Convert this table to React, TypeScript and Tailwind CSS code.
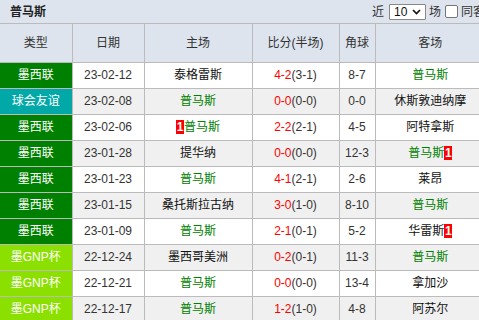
import React from "react";

type Row = {
  type: string;
  date: string;
  home: string;
  homeWin?: boolean;
  homeRed?: boolean;
  score: string;
  half: string;
  corner: string;
  away: string;
  awayWin?: boolean;
  awayRed?: boolean;
};

const TEAM = "普马斯";

const rows: Row[] = [
  { type: "墨西联", date: "23-02-12", home: "泰格雷斯", score: "4-2", half: "(3-1)", corner: "8-7", away: TEAM },
  { type: "球会友谊", date: "23-02-08", home: TEAM, score: "0-0", half: "(0-0)", corner: "0-0", away: "休斯敦迪纳摩" },
  { type: "墨西联", date: "23-02-06", home: TEAM, homeRed: true, score: "2-2", half: "(2-1)", corner: "4-5", away: "阿特拿斯" },
  { type: "墨西联", date: "23-01-28", home: "提华纳", score: "0-0", half: "(0-0)", corner: "12-3", away: TEAM, awayRed: true },
  { type: "墨西联", date: "23-01-23", home: TEAM, score: "4-1", half: "(2-1)", corner: "2-6", away: "莱昂" },
  { type: "墨西联", date: "23-01-15", home: "桑托斯拉古纳", score: "3-0", half: "(1-0)", corner: "8-10", away: TEAM },
  { type: "墨西联", date: "23-01-09", home: TEAM, score: "2-1", half: "(0-1)", corner: "5-2", away: "华雷斯", awayRed: true },
  { type: "墨GNP杯", date: "22-12-24", home: "墨西哥美洲", score: "0-2", half: "(0-1)", corner: "11-3", away: TEAM },
  { type: "墨GNP杯", date: "22-12-21", home: TEAM, score: "0-0", half: "(0-0)", corner: "13-4", away: "拿加沙" },
  { type: "墨GNP杯", date: "22-12-17", home: TEAM, score: "1-2", half: "(1-0)", corner: "4-8", away: "阿苏尔" },
];

function typeBg(t: string) {
  if (t === "球会友谊") return "bg-[#00a8a8]";
  if (t === "墨GNP杯") return "bg-[#8ce000]";
  return "bg-[#008000]";
}

function Red() {
  return (
    <span className="inline-block w-[8px] h-[14px] leading-[14px] bg-[#ff0000] text-white font-bold text-[12px] text-center align-middle">
      1
    </span>
  );
}

function Team({ name, red, side }: { name: string; red?: boolean; side: "home" | "away" }) {
  const isUs = name === TEAM;
  return (
    <span className="inline-flex items-center">
      {red && side === "home" && <Red />}
      <span className={isUs ? "text-[#008000]" : "text-[#111]"}>{name}</span>
      {red && side === "away" && <Red />}
    </span>
  );
}

export default function App() {
  return (
    <div className="w-[479px] h-[320px] overflow-hidden bg-white text-[12px] text-[#333] font-['Microsoft_YaHei','Liberation_Sans','Noto_Sans_CJK_SC',sans-serif]">
      <div className="w-[485px]">
        {/* title bar */}
        <div className="h-[24px] bg-[#dde4ed] border-b border-[#bbb] flex items-center justify-between">
          <span className="pl-[10px] font-bold text-[12px] text-[#222]">普马斯</span>
          <div className="flex items-center">
            <span className="mr-[5px]">近</span>
            <div className="w-[37px] h-[16px] bg-white border border-[#888] flex items-center justify-between px-[4px] rounded-[1px]">
              <span className="text-[12px] text-[#111] leading-none">10</span>
              <svg width="9" height="6" viewBox="0 0 9 6">
                <path d="M1 1 L4.5 4.5 L8 1" fill="none" stroke="#111" strokeWidth="1.6" />
              </svg>
            </div>
            <span className="ml-[3px]">场</span>
            <span className="ml-[4px] w-[13px] h-[13px] bg-white border border-[#767676] rounded-[2px]" />
            <span className="ml-[3px] whitespace-nowrap">同客</span>
          </div>
        </div>

        <table className="table-fixed border-collapse w-[485px]">
          <colgroup>
            <col className="w-[72px]" />
            <col className="w-[72px]" />
            <col className="w-[108px]" />
            <col className="w-[87px]" />
            <col className="w-[36px]" />
            <col className="w-[110px]" />
          </colgroup>
          <thead>
            <tr className="h-[38px] bg-[#dde4ed]">
              {["类型", "日期", "主场", "比分(半场)", "角球", "客场"].map((h, i) => (
                <th
                  key={h}
                  className={`font-normal text-[#333] border-b border-[#bbb] ${i > 0 ? "border-l" : ""} text-center p-0 whitespace-nowrap`}
                >
                  {h}
                </th>
              ))}
            </tr>
          </thead>
          <tbody>
            {rows.map((r, i) => (
              <tr key={r.date} className={`h-[26px] ${i % 2 === 1 ? "bg-[#f0f0f0]" : "bg-white"}`}>
                <td className={`${typeBg(r.type)} text-white text-center p-0 border-b border-[#bbb] whitespace-nowrap`}>
                  {r.type}
                </td>
                <td className="text-center p-0 border-b border-l border-[#bbb]">{r.date}</td>
                <td className="text-center p-0 border-b border-l border-[#bbb] whitespace-nowrap">
                  <Team name={r.home} red={r.homeRed} side="home" />
                </td>
                <td className="text-center p-0 border-b border-l border-[#bbb] whitespace-nowrap">
                  <span className="text-[#ff0000]">{r.score}</span>
                  <span>{r.half}</span>
                </td>
                <td className="text-center p-0 border-b border-l border-[#bbb]">{r.corner}</td>
                <td className="text-center p-0 border-b border-l border-[#bbb] whitespace-nowrap">
                  <Team name={r.away} red={r.awayRed} side="away" />
                </td>
              </tr>
            ))}
          </tbody>
        </table>
      </div>
    </div>
  );
}
